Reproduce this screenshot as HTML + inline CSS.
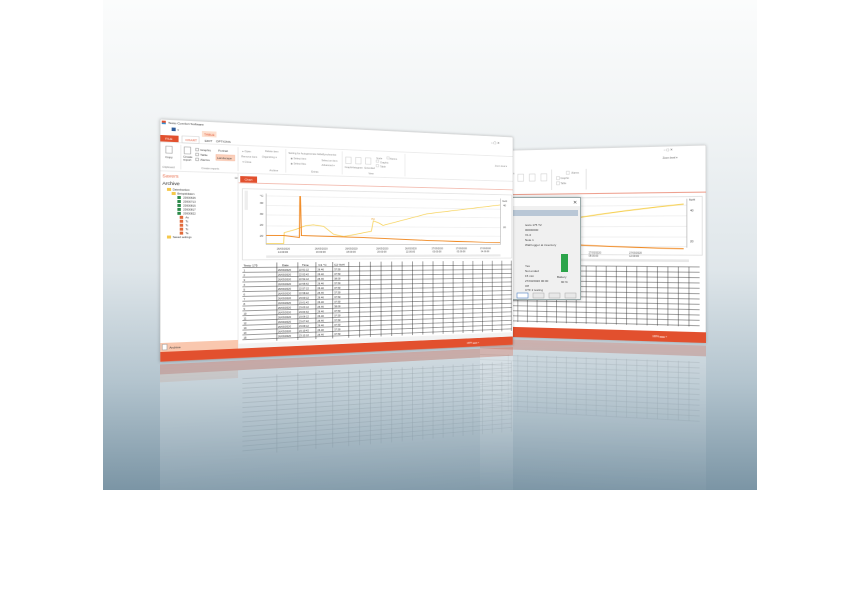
<!DOCTYPE html>
<html><head><meta charset="utf-8"><style>
html,body{margin:0;padding:0;width:860px;height:490px;overflow:hidden;background:#fff}
#bg{position:absolute;left:103px;top:0;width:654px;height:490px;background:linear-gradient(#fbfcfc 0%,#f1f4f5 25%,#dfe6ea 55%,#b3c4ce 78%,#7b95a5 100%)}
.w{position:absolute;left:0;top:0;transform-origin:0 0}
svg text{font-family:"Liberation Sans",sans-serif}
#lw{width:706px;height:488px;transform:matrix3d(0.62227,0.058144,0,0.00023834,0,0.49795,0,0,0,0,1,0,160,119,0,1);box-shadow:0 0 6px rgba(0,0,0,.25)}
#lwr{width:706px;height:488px;transform:matrix3d(0.62227,0.058144,0,0.00023834,0,0.49795,0,0,0,0,1,0,160,362,0,1);opacity:.28}
#rw{width:452px;height:370px;transform:matrix3d(0.39746,-0.034336,0,-0.00014526,0,0.5,0,0,0,0,1,0,480,151,0,1);box-shadow:0 0 6px rgba(0,0,0,.2)}
#rwr{width:452px;height:370px;transform:matrix3d(0.39746,-0.034336,0,-0.00014526,0,0.5,0,0,0,0,1,0,480,336,0,1);opacity:.25}
.flip{transform:scaleY(-1);-webkit-mask-image:linear-gradient(to top,#000 0%,rgba(0,0,0,.5) 40%,transparent 85%);mask-image:linear-gradient(to top,#000 0%,rgba(0,0,0,.5) 40%,transparent 85%)}
#dlg{position:absolute;left:494px;top:197px;width:85px;height:101px;background:#f0f0f0;border:1px solid #9aa;box-shadow:0 0 4px rgba(0,0,0,.3)}
</style></head><body>
<div id="bg"></div>

<div class="w" id="rwr"><div class="flip"><svg width="452" height="370">
<rect width="452" height="370" fill="#fff"/>
<rect x="0" y="350" width="452" height="20" fill="#e2502e"/>
<g stroke="#555" stroke-width=".8">
<path d="M0 228H440M0 238H440M0 248H440M0 258H440M0 268H440M0 278H440M0 288H440M0 298H440M0 308H440M0 318H440M0 328H440M0 338H440"/>
<path d="M60 228V340M80 228V340M100 228V340M120 228V340M140 228V340M160 228V340M180 228V340M200 228V340M220 228V340M240 228V340M260 228V340M280 228V340M300 228V340M320 228V340M340 228V340M360 228V340M380 228V340M400 228V340M420 228V340"/>
</g></svg></div></div>

<div class="w" id="lwr"><div class="flip"><svg width="706" height="488">
<rect width="706" height="488" fill="#fff"/>
<rect x="0" y="468" width="706" height="20" fill="#e2502e"/>
<rect x="0" y="452" width="138" height="16" fill="#f9c7ae"/>
<g stroke="#444" stroke-width=".8">
<path d="M146 300H703M146 310H703M146 320H703M146 330H703M146 340H703M146 350H703M146 360H703M146 370H703M146 380H703M146 390H703M146 400H703M146 410H703M146 420H703M146 430H703M146 440H703M146 450H703"/>
<path d="M210 290V455M250 290V455M285 290V455M318 290V455M350 290V455M372 290V455M394 290V455M416 290V455M438 290V455M460 290V455M482 290V455M504 290V455M526 290V455M548 290V455M570 290V455M592 290V455M614 290V455M636 290V455M658 290V455M680 290V455M702 290V455"/>
</g></svg></div></div>

<div class="w" id="rw"><svg width="452" height="370">
<rect width="452" height="370" fill="#fff" stroke="#bbb"/>
<text x="372" y="9" font-size="6" fill="#555">–   ▢   ✕</text>
<text x="370" y="24" font-size="5" fill="#666">Zoom level ▾</text>
<g stroke="#bbb" fill="none" stroke-width=".8">
<rect x="80" y="48" width="12" height="14"/><rect x="104" y="48" width="12" height="14"/><rect x="128" y="48" width="12" height="14"/>
<rect x="180" y="44" width="6" height="6"/><rect x="160" y="54" width="6" height="6"/><rect x="160" y="64" width="6" height="6"/>
<path d="M150 40V80M220 40V80"/></g>
<text x="190" y="49" font-size="5" fill="#888">Alarms</text>
<text x="168" y="59" font-size="5" fill="#888">Graphic</text>
<text x="168" y="69" font-size="5" fill="#888">Table</text>
<text x="60" y="48" font-size="5" fill="#888">Zoom</text>
<path d="M0 88H452" stroke="#e8806a" stroke-width="1.5"/>
<rect x="20" y="96" width="425" height="110" fill="#fff" stroke="#ccc"/>
<g stroke="#ddd" stroke-width=".8"><path d="M20 112H416M20 132H416M20 152H416M20 172H416M20 190H416"/></g>
<path d="M416 100V192" stroke="#999"/>
<path d="M0 170 C120 145 250 125 410 110" stroke="#f6cf4e" stroke-width="2" fill="none"/>
<path d="M0 176 C150 186 300 192 410 194" stroke="#f08a24" stroke-width="2" fill="none"/>
<text x="420" y="104" font-size="6" fill="#444">%rH</text>
<text x="422" y="124" font-size="6" fill="#444">40</text>
<text x="422" y="182" font-size="6" fill="#444">20</text>
<g font-size="5" fill="#555"><text x="150" y="204">27/03/2020</text><text x="150" y="210">04:00:00</text><text x="225" y="204">27/03/2020</text><text x="225" y="210">08:00:00</text><text x="305" y="204">27/03/2020</text><text x="305" y="210">12:00:00</text></g>
<rect x="20" y="214" width="400" height="5" fill="#e8e8e8"/>
<g stroke="#333" stroke-width=".9">
<path d="M0 228H440M0 238H440M0 248H440M0 258H440M0 268H440M0 278H440M0 288H440M0 298H440M0 308H440M0 318H440M0 328H440M0 338H440"/>
<path d="M60 228V340M80 228V340M100 228V340M120 228V340M140 228V340M160 228V340M180 228V340M200 228V340M220 228V340M240 228V340M260 228V340M280 228V340M300 228V340M320 228V340M340 228V340M360 228V340M380 228V340M400 228V340M420 228V340"/>
</g>
<rect x="0" y="350" width="452" height="20" fill="#e2502e"/>
<text x="350" y="362" font-size="5" fill="#fff">100%  ▬▬  +</text>
</svg></div>

<div id="dlg"><svg width="85" height="101">
<rect x="0" y="0" width="85" height="8" fill="#fff"/>
<text x="78" y="6" font-size="5" fill="#555">✕</text>
<rect x="4" y="12" width="79" height="6" fill="#b9c7d6"/>
<g font-size="3" fill="#444">
<text x="30" y="28">testo 175 T2</text><text x="30" y="33">00000000</text><text x="30" y="38">V1.0</text><text x="30" y="43">Note 1</text><text x="30" y="48">Wall logger at inventory</text>
<text x="30" y="69">Yes</text><text x="30" y="74">Not ended</text><text x="30" y="79">15 min</text><text x="30" y="84">27/03/2020 00:00</text><text x="30" y="89">Off</text><text x="30" y="93">CTF 2 testing</text>
<text x="62" y="80">Battery</text><text x="66" y="85">90 %</text></g>
<rect x="66" y="56" width="7" height="18" fill="#2ca44a"/>
<rect x="22" y="95" width="11" height="5" fill="#fff" stroke="#4d7fc4" stroke-width=".6"/>
<rect x="38" y="95" width="11" height="5" fill="#e8e8e8" stroke="#aaa" stroke-width=".5"/>
<rect x="54" y="95" width="11" height="5" fill="#e8e8e8" stroke="#aaa" stroke-width=".5"/>
<rect x="70" y="95" width="11" height="5" fill="#e8e8e8" stroke="#aaa" stroke-width=".5"/>
</svg></div>

<div class="w" id="lw"><svg width="706" height="488">
<rect width="706" height="488" fill="#fff"/>
<rect x="3" y="3" width="7" height="7" fill="#e2502e"/><rect x="3" y="7" width="7" height="3" fill="#3a8fd0"/>
<text x="14" y="9" font-size="6" fill="#333">Testo Comfort Software</text>
<text x="655" y="18" font-size="7" fill="#555">–    ▢    ✕</text>
<rect x="20" y="16" width="7" height="7" fill="#2f5d9b"/><text x="30" y="22" font-size="5" fill="#555">▾</text>
<rect x="73" y="20" width="26" height="12" fill="#fde0cf"/>
<text x="77" y="29" font-size="6" fill="#e2502e">TABLE</text>
<rect x="0" y="32" width="32" height="13" fill="#e2502e"/>
<text x="9" y="41" font-size="6" fill="#fff">FILE</text>
<rect x="38" y="32" width="30" height="14" fill="#fff" stroke="#ccc"/>
<text x="44" y="42" font-size="6" fill="#e2502e">CHART</text>
<text x="78" y="42" font-size="6" fill="#444">EDIT</text>
<text x="98" y="42" font-size="6" fill="#444">OPTIONS</text>
<path d="M0 46H706" stroke="#d8d8d8"/>
<g stroke="#777" fill="#fff" stroke-width=".8">
<rect x="10" y="54" width="11" height="14"/><rect x="42" y="54" width="11" height="14"/>
<rect x="62" y="56" width="5" height="5"/><rect x="62" y="66" width="5" height="5"/><rect x="62" y="76" width="5" height="5"/></g>
<rect x="98" y="67" width="34" height="12" fill="#fbd0bb" stroke="#f0a080" stroke-width=".6"/>
<g font-size="5.5" fill="#444">
<text x="9" y="78">Copy</text><text x="40" y="76">Create</text><text x="40" y="82">report</text>
<text x="70" y="61">Graphic</text><text x="70" y="71">Table</text><text x="70" y="81">Alarms</text>
<text x="102" y="61">Portrait</text><text x="100" y="76">Landscape</text></g>
<g font-size="5" fill="#888"><text x="4" y="98">Clipboard</text><text x="72" y="98">Create reports</text>
<text x="146" y="60">▸ Open</text><text x="144" y="71">Remove item</text><text x="146" y="82">▾ Close</text>
<text x="188" y="58">Delete item</text><text x="182" y="70">Organizing ▾</text><text x="196" y="98">Archive</text>
<text x="232" y="60">Setting for Autogenerate folder</text><text x="236" y="71">◉ Select item</text><text x="236" y="82">◉ Select files</text>
<text x="298" y="60">Synchronise</text><text x="296" y="73">Select on item</text><text x="296" y="83">Advanced ▾</text><text x="276" y="98">Extras</text>
<text x="342" y="86">Graph</text><text x="356" y="86">Histogram</text><text x="382" y="86">Extended</text>
<text x="406" y="64">Scale</text><text x="414" y="73">Graphic</text><text x="414" y="82">Table</text><text x="434" y="64">Alarms</text><text x="390" y="98">View</text>
<text x="664" y="71">Zoom level ▾</text></g>
<g stroke="#bbb" fill="none" stroke-width=".8"><rect x="344" y="62" width="11" height="14"/><rect x="364" y="62" width="11" height="14"/><rect x="384" y="62" width="11" height="14"/>
<rect x="406" y="66" width="5" height="5"/><rect x="406" y="76" width="5" height="5"/><rect x="428" y="58" width="5" height="5"/></g>
<g stroke="#ddd"><path d="M36 50V100M138 50V100M227 50V100M337 50V100M466 50V100"/></g>
<path d="M0 104H706" stroke="#d8d8d8"/>
<path d="M138 104V468" stroke="#ddd"/>
<text x="4" y="117" font-size="9" fill="#e8704e">Savers</text>
<text x="132" y="116" font-size="6" fill="#666">⊞</text>
<text x="4" y="132" font-size="9" fill="#222">Archive</text>
<g font-size="5" fill="#333">
<rect x="12" y="138" width="7" height="6" fill="#f5c84a"/><text x="22" y="143">Datenbanken</text>
<rect x="20" y="146" width="7" height="6" fill="#f5c84a"/><text x="30" y="151">Beispieldaten</text>
<rect x="30" y="154" width="6" height="6" fill="#2c8a4a"/><text x="40" y="159">20000626</text>
<rect x="30" y="162" width="6" height="6" fill="#2c8a4a"/><text x="40" y="167">20000713</text>
<rect x="30" y="170" width="6" height="6" fill="#2c8a4a"/><text x="40" y="175">20000815</text>
<rect x="30" y="178" width="6" height="6" fill="#2c8a4a"/><text x="40" y="183">20000817</text>
<rect x="30" y="186" width="6" height="6" fill="#2c8a4a"/><text x="40" y="191">20000822</text>
<rect x="34" y="194" width="6" height="6" fill="#e26a3a"/><text x="44" y="199">Ao</text>
<rect x="34" y="202" width="6" height="6" fill="#e26a3a"/><text x="44" y="207">Tc</text>
<rect x="34" y="210" width="6" height="6" fill="#e26a3a"/><text x="44" y="215">Tc</text>
<rect x="34" y="218" width="6" height="6" fill="#e26a3a"/><text x="44" y="223">Tc</text>
<rect x="34" y="226" width="6" height="6" fill="#e26a3a"/><text x="44" y="231">Ta</text>
<rect x="12" y="234" width="7" height="6" fill="#f5c84a"/><text x="22" y="239">Saved settings</text></g>
<rect x="0" y="450" width="138" height="18" fill="#f9c7ae"/>
<rect x="4" y="453" width="8" height="11" fill="#fff" stroke="#999"/>
<text x="16" y="462" font-size="6" fill="#333">Archive</text>
<rect x="142" y="110" width="31" height="13" fill="#e2502e"/>
<text x="150" y="119" font-size="6" fill="#fff">Chart</text>
<path d="M139 124H706" stroke="#e8806a" stroke-width="1.2"/>
<rect x="146" y="136" width="557" height="148" fill="#fff" stroke="#ccc"/>
<rect x="150" y="140" width="6" height="40" fill="#eee"/>
<g stroke="#ddd" stroke-width=".8"><path d="M190 150H677M190 170H677M190 190H677M190 213H677M190 233H677"/></g>
<path d="M190 145V252M677 145V252" stroke="#888" stroke-width=".8"/>
<path d="M190 252H677" stroke="#888" stroke-width=".8"/>
<g font-size="6" fill="#444"><text x="178" y="152">°C</text><text x="178" y="167">40</text><text x="178" y="190">30</text><text x="178" y="213">20</text><text x="178" y="236">20</text>
<text x="681" y="153">%rH</text><text x="683" y="163">40</text><text x="683" y="214">20</text></g>
<path d="M190 250 L223 250 L224 227 L246 220 L265 212 L280 210 L300 213 L320 230 L340 235 L396 223 L400 200 L412 205 L420 210 L513 183 L676 160" stroke="#f6cf4e" stroke-width="1.5" fill="none"/>
<path d="M190 233 L223 233 L253 237 L254 150 L255 150 L257 233 L380 237 L513 243 L676 248" stroke="#f08a24" stroke-width="2" fill="none"/>
<text x="396" y="198" font-size="5" fill="#e8a030">Pkt</text>
<g font-size="5" fill="#444">
<text x="210" y="263">26/03/2020</text><text x="212" y="270">14:00:00</text>
<text x="283" y="263">26/03/2020</text><text x="285" y="270">16:00:00</text>
<text x="343" y="263">26/03/2020</text><text x="345" y="270">18:00:00</text>
<text x="406" y="263">26/03/2020</text><text x="408" y="270">20:00:00</text>
<text x="466" y="263">26/03/2020</text><text x="468" y="270">22:00:00</text>
<text x="523" y="263">27/03/2020</text><text x="525" y="270">00:00:00</text>
<text x="576" y="263">27/03/2020</text><text x="578" y="270">02:00:00</text>
<text x="630" y="263">27/03/2020</text><text x="632" y="270">04:00:00</text></g>
<rect x="190" y="275" width="487" height="5" fill="#eaeaea"/>
<g stroke="#222" stroke-width=".9">
<path d="M146 300H703M146 310H703M146 320H703M146 330H703M146 340H703M146 350H703M146 360H703M146 370H703M146 380H703M146 390H703M146 400H703M146 410H703M146 420H703M146 430H703M146 440H703M146 450H703"/>
<path d="M210 290V455M250 290V455M285 290V455M318 290V455M350 290V455M372 290V455M394 290V455M416 290V455M438 290V455M460 290V455M482 290V455M504 290V455M526 290V455M548 290V455M570 290V455M592 290V455M614 290V455M636 290V455M658 290V455M680 290V455M702 290V455"/>
</g>
<g font-size="6" fill="#111"><text x="148" y="298">Testo 175</text><text x="220" y="298">Date</text><text x="258" y="298">Time</text><text x="290" y="298">C1 °C</text><text x="321" y="298">C2 %rH</text></g>
<g font-size="5" fill="#222">
<text x="148" y="308">1</text><text x="148" y="318">2</text><text x="148" y="328">3</text><text x="148" y="338">4</text><text x="148" y="348">5</text><text x="148" y="358">6</text><text x="148" y="368">7</text><text x="148" y="378">8</text><text x="148" y="388">9</text><text x="148" y="398">10</text><text x="148" y="408">11</text><text x="148" y="418">12</text><text x="148" y="428">13</text><text x="148" y="438">14</text><text x="148" y="448">15</text>
<text x="212" y="308">26/03/2020</text><text x="212" y="318">26/03/2020</text><text x="212" y="328">26/03/2020</text><text x="212" y="338">26/03/2020</text><text x="212" y="348">26/03/2020</text><text x="212" y="358">26/03/2020</text><text x="212" y="368">26/03/2020</text><text x="212" y="378">26/03/2020</text><text x="212" y="388">26/03/2020</text><text x="212" y="398">26/03/2020</text><text x="212" y="408">26/03/2020</text><text x="212" y="418">26/03/2020</text><text x="212" y="428">26/03/2020</text><text x="212" y="438">26/03/2020</text><text x="212" y="448">26/03/2020</text>
<text x="252" y="308">22:51:12</text><text x="252" y="318">22:52:42</text><text x="252" y="328">22:54:12</text><text x="252" y="338">22:55:42</text><text x="252" y="348">22:57:12</text><text x="252" y="358">22:58:42</text><text x="252" y="368">23:00:12</text><text x="252" y="378">23:01:42</text><text x="252" y="388">23:03:12</text><text x="252" y="398">23:04:42</text><text x="252" y="408">23:06:12</text><text x="252" y="418">23:07:42</text><text x="252" y="428">23:09:12</text><text x="252" y="438">23:10:42</text><text x="252" y="448">23:12:12</text>
<text x="288" y="308">26.46</text><text x="288" y="318">26.46</text><text x="288" y="328">26.46</text><text x="288" y="338">26.46</text><text x="288" y="348">26.46</text><text x="288" y="358">26.46</text><text x="288" y="368">26.46</text><text x="288" y="378">26.46</text><text x="288" y="388">26.46</text><text x="288" y="398">26.46</text><text x="288" y="408">26.46</text><text x="288" y="418">26.46</text><text x="288" y="428">26.46</text><text x="288" y="438">26.46</text><text x="288" y="448">26.46</text>
<text x="321" y="308">37.50</text><text x="321" y="318">37.50</text><text x="321" y="328">38.00</text><text x="321" y="338">37.50</text><text x="321" y="348">37.50</text><text x="321" y="358">37.50</text><text x="321" y="368">37.50</text><text x="321" y="378">37.50</text><text x="321" y="388">38.00</text><text x="321" y="398">37.50</text><text x="321" y="408">37.50</text><text x="321" y="418">37.50</text><text x="321" y="428">37.50</text><text x="321" y="438">37.50</text><text x="321" y="448">37.50</text></g>
<rect x="139" y="458" width="567" height="10" fill="#f2f2f2"/>
<rect x="0" y="468" width="706" height="20" fill="#e2502e"/>
<text x="600" y="480" font-size="5" fill="#fff">100%  ▬▬  +</text>
<rect x="0" y="0" width="706" height="488" fill="none" stroke="#bbb"/>
</svg></div>
</body></html>
